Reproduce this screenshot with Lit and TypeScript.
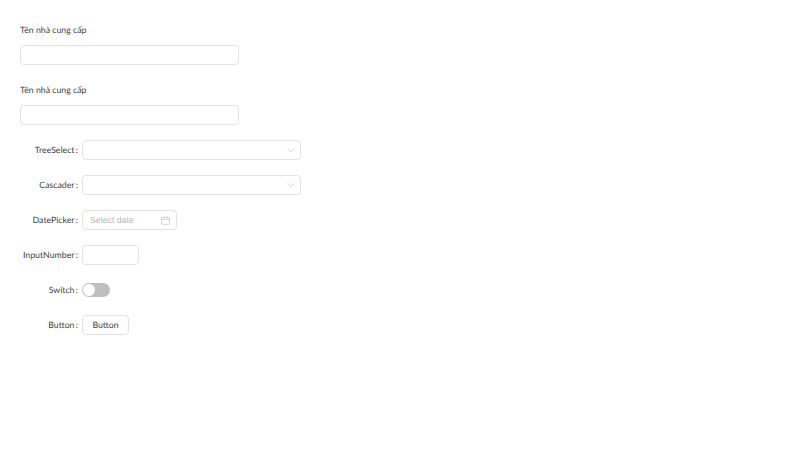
import { LitElement, html, css } from "lit";
import { customElement } from "lit/decorators.js";

@customElement("app-root")
export class AppRoot extends LitElement {
  static styles = css`
    :host { display: block; width: 800px; height: 450px; background: #fff; font-family: "Lato", sans-serif; font-size: 8.75px; text-rendering: geometricPrecision; color: rgba(0,0,0,.8); box-sizing: border-box; padding: 20px; }
    .v { width: 219px; display: flex; flex-direction: column; margin-bottom: 15px; }
    .v label { height: 20px; line-height: 20px; margin-bottom: 5px; }
    .box { box-sizing: border-box; height: 20px; border: 1px solid #e2e2e2; border-radius: 3.75px; background: #fff; flex: none; }
    .row { display: flex; align-items: center; height: 20px; margin-bottom: 15px; }
    .lab { width: 54.5px; text-align: right; white-space: nowrap; padding-bottom: 1px; }
    .colon { width: 3px; margin-left: .5px; margin-right: 4px; padding-bottom: 1px; text-align: right; }
    .sel { width: 219px; display: flex; align-items: center; justify-content: flex-end; padding-right: 5.5px; }
    .date { width: 95px; display: flex; align-items: center; padding: 0 6.5px 0 7px; justify-content: space-between; color: #b4b4b4; font-family: "Liberation Sans", sans-serif; }
    .num { width: 57px; }
    .sw { width: 28px; height: 14px; background: #bfbfbf; border-radius: 7px; position: relative; }
    .sw i { position: absolute; left: 1.25px; top: 1.25px; width: 11.5px; height: 11.5px; border-radius: 50%; background: #fff; }
    .btn { width: 47px; text-align: center; line-height: 17px; }
  `;
  private row(label: string, ctl: unknown) {
    return html`<div class="row"><div class="lab">${label}</div><span class="colon">:</span>${ctl}</div>`;
  }
  render() {
    const chev = html`<svg width="8" height="8" viewBox="0 0 8 8" fill="none" stroke="#c9c9c9" stroke-width=".8"><path d="M.6 2.2L4 5.8l3.4-3.6"/></svg>`;
    const cal = html`<svg width="9" height="9" viewBox="0 0 9 9" fill="none" stroke="#c4c4c4" stroke-width=".7"><rect x=".6" y="1.4" width="7.8" height="6.9" rx=".5"/><path d="M.6 3.4h7.8M2.7.5v1.6M6.3.5v1.6"/></svg>`;
    return html`
      <div class="v"><label>Tên nhà cung cấp</label><div class="box"></div></div>
      <div class="v"><label>Tên nhà cung cấp</label><div class="box"></div></div>
      ${this.row("TreeSelect", html`<div class="box sel">${chev}</div>`)}
      ${this.row("Cascader", html`<div class="box sel">${chev}</div>`)}
      ${this.row("DatePicker", html`<div class="box date"><span>Select date</span>${cal}</div>`)}
      ${this.row("InputNumber", html`<div class="box num"></div>`)}
      ${this.row("Switch", html`<div class="sw"><i></i></div>`)}
      ${this.row("Button", html`<div class="box btn">Button</div>`)}
    `;
  }
}
